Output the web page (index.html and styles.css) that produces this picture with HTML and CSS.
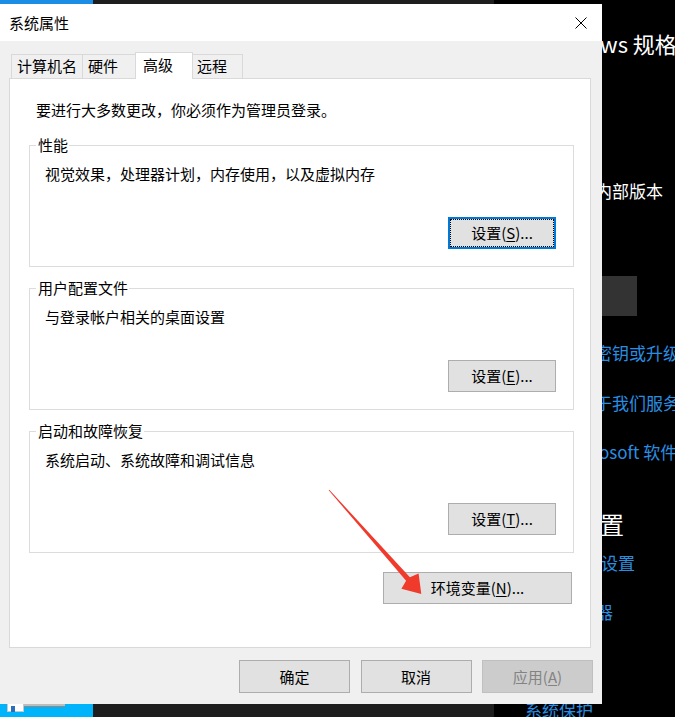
FILE: index.html
```html
<!DOCTYPE html>
<html lang="zh-CN">
<head>
<meta charset="utf-8">
<title>系统属性</title>
<link rel="stylesheet" href="styles.css">
</head>
<body>
<div class="desktop">
  <div class="win-blue-top"></div>
  <div class="win-dark"></div>
  <div class="win-blue-bottom">
    <span class="thumb"><span class="thumb-icon"></span></span>
    <span class="thumb-strip"></span>
  </div>

  <div class="settings">
    <div class="s-line s-title">ws 规格</div>
    <div class="s-line s-build">内部版本</div>
    <div class="s-copy"></div>
    <div class="s-line s-link s-key">更改产品密钥或升级 Windows</div>
    <div class="s-line s-link s-terms">阅读适用于我们服务的 Microsoft 服务协议</div>
    <div class="s-line s-link s-license">osoft 软件许可条款</div>
    <div class="s-line s-heading">设置</div>
    <div class="s-line s-link s-bitlocker">设置</div>
    <div class="s-line s-link s-devmgr">设备管理器</div>
    <div class="s-line s-link s-protect">系统保护</div>
  </div>

  <div class="dialog">
    <div class="titlebar">
      <span class="title">系统属性</span>
      <svg class="close" width="12" height="12" viewBox="0 0 12 12"><path d="M0.5 0.5 L11.5 11.5 M11.5 0.5 L0.5 11.5" stroke="#000" stroke-width="1" fill="none"/></svg>
    </div>
    <div class="dlg-body">
      <div class="tabs">
        <div class="tab">计算机名</div>
        <div class="tab">硬件</div>
        <div class="tab active">高级</div>
        <div class="tab tab-last">远程</div>
      </div>
      <div class="panel">
        <div class="note">要进行大多数更改，你必须作为管理员登录。</div>
        <div class="group">
          <div class="group-title">性能</div>
          <div class="desc">视觉效果，处理器计划，内存使用，以及虚拟内存</div>
          <div class="group-actions"><button class="btn btn-settings focused">设置(<u>S</u>)...</button></div>
        </div>
        <div class="group">
          <div class="group-title">用户配置文件</div>
          <div class="desc">与登录帐户相关的桌面设置</div>
          <div class="group-actions"><button class="btn btn-settings">设置(<u>E</u>)...</button></div>
        </div>
        <div class="group">
          <div class="group-title">启动和故障恢复</div>
          <div class="desc">系统启动、系统故障和调试信息</div>
          <div class="group-actions"><button class="btn btn-settings">设置(<u>T</u>)...</button></div>
        </div>
        <div class="env-row"><button class="btn btn-env">环境变量(<u>N</u>)...</button></div>
      </div>
      <div class="dialog-buttons">
        <button class="btn btn-dlg">确定</button>
        <button class="btn btn-dlg">取消</button>
        <button class="btn btn-dlg disabled">应用(<u>A</u>)</button>
      </div>
    </div>
  </div>

  <svg class="annotation" width="675" height="717" viewBox="0 0 675 717">
    <polygon fill="#f03a2c" points="329.3,489.7 409.9,577.3 418.6,573.6 421.3,594.0 401.4,588.8 406.1,580.7 328.7,490.3"/>
  </svg>
</div>
</body>
</html>
```

FILE: styles.css
```css
body {
  margin: 0;
  background: #000;
}

.desktop {
  position: relative;
  width: 675px;
  height: 717px;
  overflow: hidden;
  background: #000;
  font-family: "Noto Sans CJK SC", "Noto Sans", sans-serif;
}

/* windows behind the dialog */
.win-blue-top {
  position: absolute;
  left: 0;
  top: 0;
  width: 93px;
  height: 10px;
  background: #1b8de4;
}

.win-dark {
  position: absolute;
  left: 93px;
  top: 0;
  width: 401px;
  height: 717px;
  background: #1e1e1e;
}

.win-blue-bottom {
  position: absolute;
  left: 0;
  top: 700px;
  width: 93px;
  height: 17px;
  background: #00b4fc;
  display: flex;
  align-items: flex-start;
  padding: 3px 0 0 7px;
  box-sizing: border-box;
}

.thumb {
  width: 17px;
  height: 9px;
  background: #fff;
  border: 1px solid #c8c8c8;
  box-sizing: border-box;
  display: flex;
  padding: 2px 0 0 3px;
}

.thumb-icon {
  width: 4px;
  height: 6px;
  background: #2b6fb8;
}

.thumb-strip {
  width: 41px;
  height: 4px;
  background: #bdbdbd;
  border-bottom: 1px solid #8a8a8a;
  box-sizing: border-box;
}

/* settings window on the right */
.settings {
  position: absolute;
  left: 494px;
  top: 0;
  width: 181px;
  height: 717px;
  background: #000;
  overflow: hidden;
  padding-left: 33px;
  box-sizing: border-box;
  color: #fff;
}

.s-line {
  white-space: nowrap;
  font-size: 17px;
  line-height: 24px;
  height: 24px;
}

.s-link {
  color: #2a8ee0;
}

.s-title {
  font-size: 22px;
  line-height: 30px;
  height: 30px;
  margin: 28px 0 0 73px;
}

.s-build {
  margin: 121px 0 0 68px;
}

.s-copy {
  width: 77px;
  height: 40px;
  background: #333;
  margin: 73px 0 0 33px;
}

.s-key {
  margin-top: 25px;
}

.s-terms {
  margin-top: 26px;
}

.s-license {
  margin: 25px 0 0 72px;
}

.s-heading {
  font-size: 24px;
  line-height: 32px;
  height: 32px;
  margin: 44px 0 0 49px;
}

.s-bitlocker {
  margin: 11px 0 0 74px;
}

.s-devmgr {
  margin: 25px 0 0 1px;
}

.s-protect {
  margin: 74px 0 0 -2px;
}

/* dialog */
.dialog {
  position: absolute;
  left: 0;
  top: 4px;
  width: 602px;
  height: 700px;
  background: #f0f0f0;
  display: flex;
  flex-direction: column;
  font-size: 15px;
  color: #000;
}

.titlebar {
  height: 37px;
  flex: none;
  background: #fff;
  display: flex;
  align-items: center;
  justify-content: space-between;
  padding: 1px 15px 0 9px;
  box-sizing: border-box;
}

.title {
  line-height: 20px;
}

.close {
  display: block;
}

.dlg-body {
  flex: 1;
  display: flex;
  flex-direction: column;
  padding: 11px 11px 11px 9px;
}

.tabs {
  display: flex;
  align-items: flex-end;
  height: 27px;
  margin: 0 0 -1px 2px;
}

.tab {
  box-sizing: border-box;
  height: 24px;
  min-width: 55px;
  margin-bottom: 1px;
  padding: 0 5px;
  border: 1px solid #d9d9d9;
  border-right: none;
  border-bottom: none;
  line-height: 22px;
  background: #f0f0f0;
  white-space: nowrap;
}

.tab.active {
  position: relative;
  z-index: 1;
  height: 27px;
  width: 58px;
  margin: 0 -2px;
  padding-left: 7px;
  border-right: 1px solid #d9d9d9;
  background: #fff;
  line-height: 24px;
}

.tab-last {
  min-width: 52px;
  border-right: 1px solid #d9d9d9;
}

.panel {
  background: #fff;
  border: 1px solid #d9d9d9;
  padding: 21px 16px 43px 19px;
  display: flex;
  flex-direction: column;
}

.note {
  line-height: 20px;
  margin-left: 7px;
}

.group {
  margin-top: 25px;
  border: 1px solid #dcdcdc;
  padding: 0 17px 17px 15px;
  display: flex;
  flex-direction: column;
}

.group + .group {
  margin-top: 21px;
}

.group-title {
  align-self: flex-start;
  margin: -11px 0 0 -9px;
  padding: 0 1px 0 2px;
  background: #fff;
  line-height: 20px;
}

.desc {
  margin-top: 9px;
  line-height: 20px;
}

.group-actions {
  display: flex;
  justify-content: flex-end;
  margin-top: 33px;
}

.env-row {
  display: flex;
  justify-content: flex-end;
  margin-top: 19px;
  padding-right: 2px;
}

.btn {
  box-sizing: border-box;
  height: 32px;
  margin: 0;
  padding: 0;
  border: 1px solid #adadad;
  background: #e1e1e1;
  color: #000;
  font-family: inherit;
  font-size: 15px;
  line-height: 28px;
  text-align: center;
}

.btn u {
  text-underline-offset: 2px;
}

.btn-settings {
  width: 108px;
}

.btn.focused {
  border: 2px solid #0078d7;
  outline: 1px dotted #000;
  outline-offset: -3px;
}

.btn-env {
  width: 189px;
}

.dialog-buttons {
  display: flex;
  justify-content: flex-end;
  gap: 10.5px;
  margin: 12px -2px 0 0;
}

.btn-dlg {
  width: 111px;
  height: 33px;
}

.btn.disabled {
  background: #cccccc;
  border-color: #bfbfbf;
  color: #838383;
}

.annotation {
  position: absolute;
  left: 0;
  top: 0;
  pointer-events: none;
}
```
